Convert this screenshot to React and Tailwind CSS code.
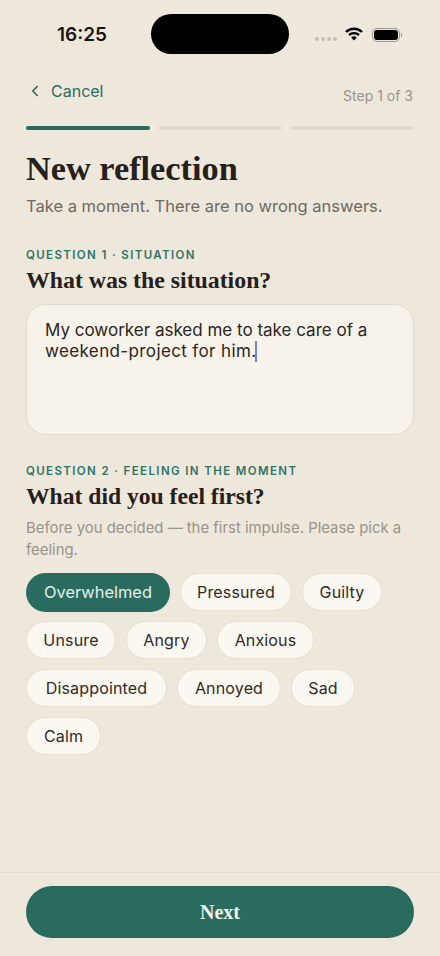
import React from 'react';
import { ChevronLeft } from 'lucide-react';

const sans = "font-['Inter','Noto_Sans',sans-serif]";
const serif = "font-['Liberation_Serif',serif]";

const rows = [
  [
    { label: 'Overwhelmed', width: 'w-[144px]', active: true },
    { label: 'Pressured', width: 'w-[112px]' },
    { label: 'Guilty', width: 'w-[80px]' },
  ],
  [
    { label: 'Unsure', width: 'w-[90px]' },
    { label: 'Angry', width: 'w-[81px]' },
    { label: 'Anxious', width: 'w-[97px]' },
  ],
  [
    { label: 'Disappointed', width: 'w-[141px]' },
    { label: 'Annoyed', width: 'w-[104px]' },
    { label: 'Sad', width: 'w-[64px]' },
  ],
  [{ label: 'Calm', width: 'w-[75px]' }],
];

const StatusBar = () => (
  <div className="relative flex h-[70px] shrink-0 items-start justify-between">
    <span className="ml-[57px] mt-[24px] text-[19px] leading-[22px] font-semibold text-[#171512]">16:25</span>
    <div className="absolute left-[151px] top-[14px] h-[40px] w-[138px] rounded-full bg-black" />
    <div className="mr-[38px] mt-[28px] flex items-center">
      <div className="mt-[8px] mr-[8px] flex gap-[2px]">
        <span className="size-[4px] rounded-full bg-[#c4bdb2]" />
        <span className="size-[4px] rounded-full bg-[#c4bdb2]" />
        <span className="size-[4px] rounded-full bg-[#c4bdb2]" />
        <span className="size-[4px] rounded-full bg-[#c4bdb2]" />
      </div>
      <svg width="18" height="14" viewBox="0 0 18 14" className="mr-[9px] -mt-[2px]">
        <path d="M1 5 A11.5 11.5 0 0 1 17 5" fill="none" stroke="#000" strokeWidth="2.4" />
        <path d="M4 8 A7.5 7.5 0 0 1 14 8" fill="none" stroke="#000" strokeWidth="2.4" />
        <path d="M6.2 10.6 A4 4 0 0 1 11.8 10.6 L9 13.6 Z" fill="#000" />
      </svg>
      <div className="flex items-center">
        <div className="flex h-[14px] w-[28px] items-center justify-center rounded-[5px] border border-[#9d978d]">
          <div className="h-[10px] w-[24px] rounded-[3px] bg-black" />
        </div>
        <div className="ml-px h-[4px] w-px bg-[#9d978d]" />
      </div>
    </div>
  </div>
);

const App = () => {
  return (
    <div className={`flex h-[956px] w-[440px] flex-col overflow-hidden bg-[#eee7dc] ${sans}`}>
      <StatusBar />

      <div className="flex h-[41px] shrink-0 justify-between pl-[26px] pr-[27px]">
        <div className="flex items-center gap-[7px] self-start pt-[11px] text-[#2b6b5e]">
          <ChevronLeft size={18} strokeWidth={2.2} />
          <span className="text-[16px] leading-[20px]">Cancel</span>
        </div>
        <span className="pt-[17px] text-[14px] leading-[18px] text-[#9a948a]">Step 1 of 3</span>
      </div>

      <div className="mt-[15px] flex shrink-0 gap-[8px] px-[26px]">
        <div className="h-[4px] flex-1 rounded-full bg-[#2a6b60]" />
        <div className="h-[4px] flex-1 rounded-full bg-[#e0d9cd]" />
        <div className="h-[4px] flex-1 rounded-full bg-[#e0d9cd]" />
      </div>

      <div className="flex flex-1 flex-col px-[26px]">
        <h1 className={`mt-[19px] text-[34.3px] leading-[38px] font-bold text-[#25201a] ${serif}`}>New reflection</h1>
        <p className="mt-[9px] text-[16.5px] leading-[20px] text-[#6f6a61]">Take a moment. There are no wrong answers.</p>

        <p className="mt-[32px] text-[11.5px] leading-[14px] font-semibold tracking-[0.12em] text-[#2f7566]">QUESTION 1 · SITUATION</p>
        <h2 className={`mt-[4px] text-[23.8px] leading-[28px] font-bold text-[#25201a] ${serif}`}>What was the situation?</h2>

        <div className="relative mt-[10px] h-[131px] rounded-[20px] border border-[#e2dace] bg-[#f7f2ea] px-[18px] py-[15px] text-[17px] leading-[21px] text-[#2a2621]">
          My coworker asked me to take care of a
          <br />
          <span className="tracking-[0.022em]">weekend-project for him.</span>
          <span className="ml-[-1px] inline-block h-[21px] w-[2px] bg-[#6f86d6] align-[-5px]" />
        </div>

        <p className="mt-[29px] text-[11.5px] leading-[14px] font-semibold tracking-[0.12em] text-[#2f7566]">QUESTION 2 · FEELING IN THE MOMENT</p>
        <h2 className={`mt-[4px] text-[23.6px] leading-[28px] font-bold text-[#25201a] ${serif}`}>What did you feel first?</h2>
        <p className="mt-[7px] text-[14.9px] leading-[22px] text-[#9a948a]">Before you decided — the first impulse. Please pick a feeling.</p>

        <div className="mt-[12px] flex flex-col gap-[10px]">
          {rows.map((row, i) => (
            <div key={i} className="flex items-center gap-[10px]">
              {row.map((chip) =>
                chip.active ? (
                  <div key={chip.label} className={`-my-px flex h-[39px] items-center justify-center rounded-full bg-[#2a6b60] text-[16.4px] text-[#e4f0ea] ${chip.width}`}>
                    {chip.label}
                  </div>
                ) : (
                  <div key={chip.label} className={`flex h-[38px] items-center justify-center rounded-full border border-[#e6dfd3] bg-[#fbf7f1] text-[16px] tracking-[0.01em] text-[#2f2b26] ${chip.width}`}>
                    {chip.label}
                  </div>
                )
              )}
            </div>
          ))}
        </div>
      </div>

      <div className="flex h-[84px] shrink-0 justify-center border-t border-[#e3dcd0] px-[26px] pt-[13px]">
        <button className={`h-[52px] w-full rounded-full bg-[#2a6b60] text-[20px] font-bold text-[#eef5ef] ${serif}`}>Next</button>
      </div>
    </div>
  );
};

export default App;
